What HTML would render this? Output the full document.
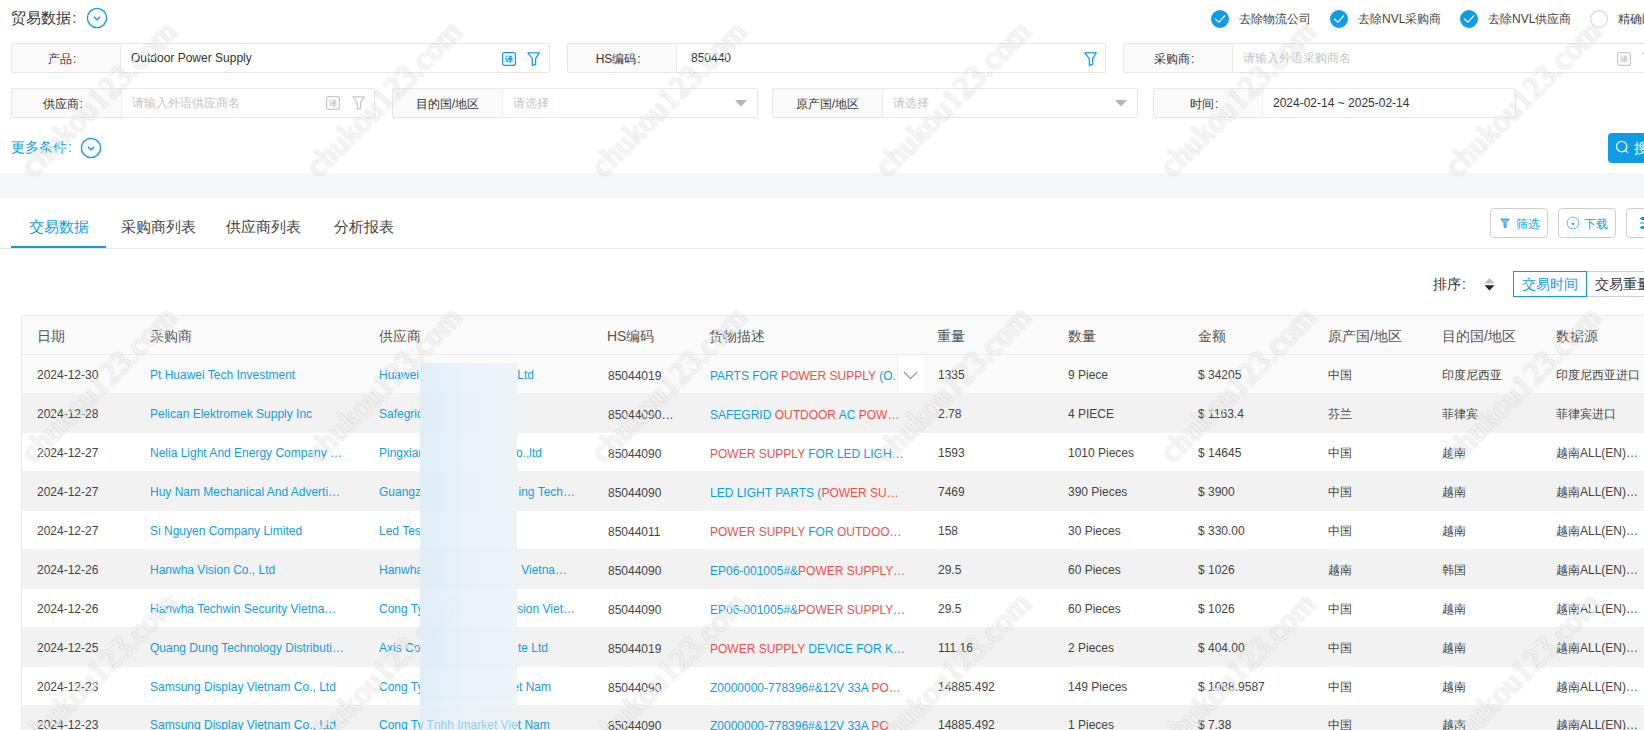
<!DOCTYPE html><html><head><meta charset="utf-8"><title>trade</title><style>
*{margin:0;padding:0;box-sizing:border-box}
html,body{width:1644px;height:730px;overflow:hidden;background:#fff}
body{position:relative;font-family:"Liberation Sans",sans-serif;color:#444;font-size:12px}
.ab{position:absolute;white-space:nowrap}
.lbl{position:absolute;background:#fafafa;border:1px solid #e6e6e6;border-radius:2px 0 0 2px;text-align:center;color:#333;font-size:12px;line-height:30px;height:30px}
.inp{position:absolute;background:#fff;border:1px solid #e6e6e6;border-left:1px solid #ececec;border-radius:0 2px 2px 0;height:30px;font-size:12px;line-height:28px;padding-left:10px;color:#333;white-space:nowrap}
.ph{color:#c4c4c4}
.co{display:inline-block;width:1em;text-align:left;padding-left:0.08em;font-family:"Liberation Sans",sans-serif}
.tr{position:absolute;left:21px;width:1623px;height:39px}
.td{position:absolute;top:0;padding-top:1px;font-size:12px;white-space:nowrap;color:#444}
.lk{color:#0e9ce5}
.rd{color:#f24d4d}
.th{position:absolute;top:0;padding-top:1px;line-height:38px;font-size:14px;color:#555;white-space:nowrap}
.wm{position:absolute;font-family:"Liberation Serif",serif;font-size:32px;line-height:normal;color:rgba(255,255,255,0.7);text-shadow:0 0 2.5px rgba(0,0,0,0.2);transform:rotate(-45deg);transform-origin:0 0;white-space:nowrap;pointer-events:none}
</style></head><body>
<div class="ab" style="left:11px;top:9px;font-size:15px;line-height:18px;color:#333">贸易数据<span class="co">:</span></div>
<svg class="ab" style="left:86px;top:7px" width="22" height="22" viewBox="0 0 22 22"><circle cx="11" cy="11" r="9.6" fill="none" stroke="#0e9ce5" stroke-width="1.4"/><path d="M7.8 9.8 L11 12.8 L14.2 9.8" fill="none" stroke="#0e9ce5" stroke-width="1.4"/></svg>
<svg class="ab" style="left:1211px;top:10px" width="18" height="18" viewBox="0 0 18 18"><circle cx="9" cy="9" r="9" fill="#0e9ce5"/><path d="M4 8.8 L8.1 12.2 L14 5.4" fill="none" stroke="#fff" stroke-width="1.3"/></svg>
<div class="ab" style="left:1239px;top:11px;line-height:16px;font-size:12px;color:#444">去除物流公司</div>
<svg class="ab" style="left:1330px;top:10px" width="18" height="18" viewBox="0 0 18 18"><circle cx="9" cy="9" r="9" fill="#0e9ce5"/><path d="M4 8.8 L8.1 12.2 L14 5.4" fill="none" stroke="#fff" stroke-width="1.3"/></svg>
<div class="ab" style="left:1358px;top:11px;line-height:16px;font-size:12px;color:#444">去除NVL采购商</div>
<svg class="ab" style="left:1460px;top:10px" width="18" height="18" viewBox="0 0 18 18"><circle cx="9" cy="9" r="9" fill="#0e9ce5"/><path d="M4 8.8 L8.1 12.2 L14 5.4" fill="none" stroke="#fff" stroke-width="1.3"/></svg>
<div class="ab" style="left:1488px;top:11px;line-height:16px;font-size:12px;color:#444">去除NVL供应商</div>
<svg class="ab" style="left:1590px;top:10px" width="18" height="18" viewBox="0 0 18 18"><circle cx="9" cy="9" r="8.4" fill="#fff" stroke="#d4d4d4" stroke-width="1.1"/></svg>
<div class="ab" style="left:1618px;top:11px;line-height:16px;font-size:12px;color:#444">精确匹配</div>
<div class="lbl" style="left:11px;top:43px;width:110px">产品<span class="co">:</span></div>
<div class="inp" style="left:120px;top:43px;width:430px">Outdoor Power Supply</div>
<svg class="ab" style="left:502px;top:52px" width="14" height="14" viewBox="0 0 14 14"><rect x="0.6" y="0.6" width="12.8" height="12.8" rx="2" fill="none" stroke="#0e9ce5" stroke-width="1.2"/><text x="7" y="10.2" font-size="8" text-anchor="middle" fill="#0e9ce5" font-family="Liberation Sans,sans-serif" font-weight="bold">译</text></svg>
<svg class="ab" style="left:526px;top:52px" width="14" height="14" viewBox="0 0 14 14"><path d="M1.9 0.9 H13.3 L9.6 6.6 V12.4 L6.3 13.3 V6.6 Z" fill="none" stroke="#0e9ce5" stroke-width="1.25" stroke-linejoin="round"/></svg>
<div class="lbl" style="left:567px;top:43px;width:110px">HS编码<span class="co">:</span></div>
<div class="inp" style="left:676px;top:43px;width:430px;padding-left:14px">850440</div>
<svg class="ab" style="left:1083px;top:52px" width="14" height="14" viewBox="0 0 14 14"><path d="M1.9 0.9 H13.3 L9.6 6.6 V12.4 L6.3 13.3 V6.6 Z" fill="none" stroke="#0e9ce5" stroke-width="1.25" stroke-linejoin="round"/></svg>
<div class="lbl" style="left:1123px;top:43px;width:110px">采购商<span class="co">:</span></div>
<div class="inp ph" style="left:1232px;top:43px;width:440px">请输入外语采购商名</div>
<svg class="ab" style="left:1617px;top:52px" width="14" height="14" viewBox="0 0 14 14"><rect x="0.6" y="0.6" width="12.8" height="12.8" rx="2" fill="none" stroke="#c8c8c8" stroke-width="1.2"/><text x="7" y="10.2" font-size="8" text-anchor="middle" fill="#c8c8c8" font-family="Liberation Sans,sans-serif" font-weight="bold">译</text></svg>
<svg class="ab" style="left:1641px;top:52px" width="14" height="14" viewBox="0 0 14 14"><path d="M1.9 0.9 H13.3 L9.6 6.6 V12.4 L6.3 13.3 V6.6 Z" fill="none" stroke="#c8c8c8" stroke-width="1.25" stroke-linejoin="round"/></svg>
<div class="lbl" style="left:11px;top:88px;width:111px">供应商<span class="co">:</span></div>
<div class="inp ph" style="left:121px;top:88px;width:254px">请输入外语供应商名</div>
<svg class="ab" style="left:326px;top:96px" width="14" height="14" viewBox="0 0 14 14"><rect x="0.6" y="0.6" width="12.8" height="12.8" rx="2" fill="none" stroke="#c8c8c8" stroke-width="1.2"/><text x="7" y="10.2" font-size="8" text-anchor="middle" fill="#c8c8c8" font-family="Liberation Sans,sans-serif" font-weight="bold">译</text></svg>
<svg class="ab" style="left:351px;top:96px" width="14" height="14" viewBox="0 0 14 14"><path d="M1.9 0.9 H13.3 L9.6 6.6 V12.4 L6.3 13.3 V6.6 Z" fill="none" stroke="#c8c8c8" stroke-width="1.25" stroke-linejoin="round"/></svg>
<div class="lbl" style="left:392px;top:88px;width:111px">目的国/地区</div>
<div class="inp ph" style="left:502px;top:88px;width:256px">请选择</div>
<svg class="ab" style="left:735px;top:100px" width="12" height="7" viewBox="0 0 12 7"><path d="M0 0 H12 L6 6.5 Z" fill="#b4b4b4"/></svg>
<div class="lbl" style="left:772px;top:88px;width:111px">原产国/地区</div>
<div class="inp ph" style="left:882px;top:88px;width:256px">请选择</div>
<svg class="ab" style="left:1115px;top:100px" width="12" height="7" viewBox="0 0 12 7"><path d="M0 0 H12 L6 6.5 Z" fill="#b4b4b4"/></svg>
<div class="lbl" style="left:1153px;top:88px;width:110px">时间<span class="co">:</span></div>
<div class="inp" style="left:1262px;top:88px;width:254px">2024-02-14 ~ 2025-02-14</div>
<div class="ab" style="left:11px;top:139px;font-size:14px;line-height:17px;color:#0e9ce5">更多条件<span class="co">:</span></div>
<svg class="ab" style="left:80px;top:137px" width="22" height="22" viewBox="0 0 22 22"><circle cx="11" cy="11" r="9.6" fill="none" stroke="#0e9ce5" stroke-width="1.4"/><path d="M7.8 9.8 L11 12.8 L14.2 9.8" fill="none" stroke="#0e9ce5" stroke-width="1.4"/></svg>
<div class="ab" style="left:1608px;top:133px;width:80px;height:30px;background:#0e9ce5;border-radius:4px"></div>
<svg class="ab" style="left:1615px;top:140px" width="14" height="14" viewBox="0 0 14 14"><circle cx="6.7" cy="6.6" r="5.2" fill="none" stroke="#fff" stroke-width="1.2"/><path d="M10.4 10.3 L13 12.9" stroke="#fff" stroke-width="1.2"/></svg>
<div class="ab" style="left:1634px;top:140px;font-size:14px;line-height:17px;color:#fff">搜索</div>
<div class="ab" style="left:0;top:173px;width:1644px;height:25px;background:#f5f6f8"></div>
<div class="ab" style="left:0;top:248px;width:1644px;height:1px;background:#e8e8e8"></div>
<div class="ab" style="left:11px;top:246px;width:95px;height:2px;background:#0e9ce5"></div>
<div class="ab" style="left:29px;top:218px;font-size:15px;line-height:18px;color:#0e9ce5">交易数据</div>
<div class="ab" style="left:121px;top:218px;font-size:15px;line-height:18px;color:#444">采购商列表</div>
<div class="ab" style="left:226px;top:218px;font-size:15px;line-height:18px;color:#444">供应商列表</div>
<div class="ab" style="left:334px;top:218px;font-size:15px;line-height:18px;color:#444">分析报表</div>
<div class="ab" style="left:1490px;top:208px;width:58px;height:30px;border:1px solid #cfcfcf;border-radius:4px;background:#fff"></div><svg class="ab" style="left:1500px;top:218px" width="10" height="11" viewBox="0 0 10 11"><path d="M0.8 1 H9.2 L6 4.8 V10 L4 9 V4.8 Z" fill="rgba(14,156,229,0.55)" stroke="#0e9ce5" stroke-width="0.9" stroke-linejoin="round"/></svg><div class="ab" style="left:1516px;top:217px;font-size:12px;line-height:14px;color:#0e9ce5">筛选</div>
<div class="ab" style="left:1558px;top:208px;width:58px;height:30px;border:1px solid #cfcfcf;border-radius:4px;background:#fff"></div><svg class="ab" style="left:1566px;top:216px" width="14" height="14" viewBox="0 0 14 14"><circle cx="7" cy="7" r="5.9" fill="none" stroke="rgba(14,156,229,0.75)" stroke-width="0.9"/><path d="M7 3.6 V7.6" stroke="rgba(14,156,229,0.45)" stroke-width="1"/><path d="M5.1 7.3 H8.9 L7 9.4 Z" fill="#0e9ce5"/></svg><div class="ab" style="left:1584px;top:217px;font-size:12px;line-height:14px;color:#0e9ce5">下载</div>
<div class="ab" style="left:1626px;top:208px;width:58px;height:30px;border:1px solid #cfcfcf;border-radius:4px;background:#fff"></div>
<svg class="ab" style="left:1638px;top:215px" width="12" height="16" viewBox="0 0 12 16"><path d="M2 3.5 H12 M2 8 H12 M2 12.5 H12" stroke="#0e9ce5" stroke-width="1.1"/><circle cx="4.5" cy="3.5" r="1.7" fill="#0e9ce5"/><circle cx="8" cy="8" r="1.7" fill="#0e9ce5"/><circle cx="4.5" cy="12.5" r="1.7" fill="#0e9ce5"/></svg>
<div class="ab" style="left:1433px;top:276px;font-size:14px;line-height:17px;color:#333">排序<span class="co">:</span></div>
<svg class="ab" style="left:1484px;top:278px" width="11" height="13" viewBox="0 0 11 13"><path d="M5.5 0 L10.5 5.5 H0.5 Z" fill="#bdbdbd"/><path d="M0.5 7.2 H10.5 L5.5 12.5 Z" fill="#222"/></svg>
<div class="ab" style="left:1586px;top:271px;width:100px;height:26px;border:1px solid #d0d0d0;background:#fff"></div>
<div class="ab" style="left:1513px;top:271px;width:74px;height:26px;border:1px solid #0e9ce5;background:#fff"></div>
<div class="ab" style="left:1522px;top:276px;font-size:14px;line-height:17px;color:#0e9ce5">交易时间</div>
<div class="ab" style="left:1595px;top:276px;font-size:14px;line-height:17px;color:#333">交易重量</div>
<div class="ab" style="left:21px;top:315px;width:1640px;height:40px;background:#fafafa;border:1px solid #ebebeb;border-right:none"></div>
<div class="ab" style="left:21px;top:354px;width:1px;height:376px;background:#ebebeb"></div>
<div class="th" style="left:37px;top:316px">日期</div>
<div class="th" style="left:150px;top:316px">采购商</div>
<div class="th" style="left:379px;top:316px">供应商</div>
<div class="th" style="left:607px;top:316px">HS编码</div>
<div class="th" style="left:709px;top:316px">货物描述</div>
<div class="th" style="left:937px;top:316px">重量</div>
<div class="th" style="left:1068px;top:316px">数量</div>
<div class="th" style="left:1198px;top:316px">金额</div>
<div class="th" style="left:1328px;top:316px">原产国/地区</div>
<div class="th" style="left:1442px;top:316px">目的国/地区</div>
<div class="th" style="left:1556px;top:316px">数据源</div>
<div class="ab" style="left:22px;top:355px;width:1622px;height:38px;background:#fafafa"></div>
<div class="td" style="left:37px;top:355px;height:38px;line-height:38px">2024-12-30</div>
<div class="td" style="left:150px;top:355px;height:38px;line-height:38px"><span class="lk">Pt Huawei Tech Investment</span></div>
<div class="td" style="left:379px;top:355px;height:38px;line-height:38px;width:41px;overflow:hidden;"><span class="lk">Huawei</span></div>
<div class="ab" style="left:517px;top:355px;width:17px;height:38px;overflow:hidden"><div class="td" style="left:auto;right:0;height:38px;line-height:38px"><span class="lk">Investment Co., Ltd</span></div></div>
<div class="td" style="left:608px;top:356px;height:38px;line-height:38px">85044019</div>
<div class="td" style="left:710px;top:356px;height:38px;line-height:38px"><span class="lk">PARTS FOR </span><span class="rd">POWER SUPPLY</span><span class="lk"> (O.</span></div>
<div class="td" style="left:938px;top:355px;height:38px;line-height:38px">1335</div>
<div class="td" style="left:1068px;top:355px;height:38px;line-height:38px">9 Piece</div>
<div class="td" style="left:1198px;top:355px;height:38px;line-height:38px">$ 34205</div>
<div class="td" style="left:1328px;top:355px;height:38px;line-height:38px">中国</div>
<div class="td" style="left:1442px;top:355px;height:38px;line-height:38px">印度尼西亚</div>
<div class="td" style="left:1556px;top:355px;height:38px;line-height:38px">印度尼西亚进口</div>
<div class="ab" style="left:897px;top:355px;width:26px;height:37px;background:#fff;border-left:1px solid #ececec"></div>
<svg class="ab" style="left:903px;top:371px" width="15" height="9" viewBox="0 0 15 9"><path d="M0.8 0.8 L7.5 7.6 L14.2 0.8" fill="none" stroke="#8a8a8a" stroke-width="1.1"/></svg>
<div class="ab" style="left:22px;top:393px;width:1622px;height:40px;background:#f2f2f2"></div>
<div class="td" style="left:37px;top:393px;height:40px;line-height:40px">2024-12-28</div>
<div class="td" style="left:150px;top:393px;height:40px;line-height:40px"><span class="lk">Pelican Elektromek Supply Inc</span></div>
<div class="td" style="left:379px;top:393px;height:40px;line-height:40px;width:41px;overflow:hidden;"><span class="lk">Safegrid</span></div>
<div class="td" style="left:608px;top:394px;height:40px;line-height:40px">85044090…</div>
<div class="td" style="left:710px;top:394px;height:40px;line-height:40px"><span class="lk">SAFEGRID </span><span class="rd">OUTDOOR</span><span class="lk"> AC </span><span class="rd">POW…</span></div>
<div class="td" style="left:938px;top:393px;height:40px;line-height:40px">2.78</div>
<div class="td" style="left:1068px;top:393px;height:40px;line-height:40px">4 PIECE</div>
<div class="td" style="left:1198px;top:393px;height:40px;line-height:40px">$ 1163.4</div>
<div class="td" style="left:1328px;top:393px;height:40px;line-height:40px">芬兰</div>
<div class="td" style="left:1442px;top:393px;height:40px;line-height:40px">菲律宾</div>
<div class="td" style="left:1556px;top:393px;height:40px;line-height:40px">菲律宾进口</div>
<div class="ab" style="left:22px;top:433px;width:1622px;height:38px;background:#fff"></div>
<div class="td" style="left:37px;top:433px;height:38px;line-height:38px">2024-12-27</div>
<div class="td" style="left:150px;top:433px;height:38px;line-height:38px"><span class="lk">Nelia Light And Energy Company …</span></div>
<div class="td" style="left:379px;top:433px;height:38px;line-height:38px;width:41px;overflow:hidden;"><span class="lk">Pingxiang</span></div>
<div class="ab" style="left:517px;top:433px;width:25px;height:38px;overflow:hidden"><div class="td" style="left:auto;right:0;height:38px;line-height:38px"><span class="lk">Technology Co.,ltd</span></div></div>
<div class="td" style="left:608px;top:434px;height:38px;line-height:38px">85044090</div>
<div class="td" style="left:710px;top:434px;height:38px;line-height:38px"><span class="rd">POWER SUPPLY</span><span class="lk"> FOR LED LIGH…</span></div>
<div class="td" style="left:938px;top:433px;height:38px;line-height:38px">1593</div>
<div class="td" style="left:1068px;top:433px;height:38px;line-height:38px">1010 Pieces</div>
<div class="td" style="left:1198px;top:433px;height:38px;line-height:38px">$ 14645</div>
<div class="td" style="left:1328px;top:433px;height:38px;line-height:38px">中国</div>
<div class="td" style="left:1442px;top:433px;height:38px;line-height:38px">越南</div>
<div class="td" style="left:1556px;top:433px;height:38px;line-height:38px">越南ALL(EN)…</div>
<div class="ab" style="left:22px;top:471px;width:1622px;height:40px;background:#f2f2f2"></div>
<div class="td" style="left:37px;top:471px;height:40px;line-height:40px">2024-12-27</div>
<div class="td" style="left:150px;top:471px;height:40px;line-height:40px"><span class="lk">Huy Nam Mechanical And Adverti…</span></div>
<div class="td" style="left:379px;top:471px;height:40px;line-height:40px;width:41px;overflow:hidden;"><span class="lk">Guangzhou</span></div>
<div class="ab" style="left:517px;top:471px;width:58px;height:40px;overflow:hidden"><div class="td" style="left:auto;right:0;height:40px;line-height:40px"><span class="lk">ing Tech…</span></div></div>
<div class="td" style="left:608px;top:472px;height:40px;line-height:40px">85044090</div>
<div class="td" style="left:710px;top:472px;height:40px;line-height:40px"><span class="lk">LED LIGHT PARTS (</span><span class="rd">POWER SU…</span></div>
<div class="td" style="left:938px;top:471px;height:40px;line-height:40px">7469</div>
<div class="td" style="left:1068px;top:471px;height:40px;line-height:40px">390 Pieces</div>
<div class="td" style="left:1198px;top:471px;height:40px;line-height:40px">$ 3900</div>
<div class="td" style="left:1328px;top:471px;height:40px;line-height:40px">中国</div>
<div class="td" style="left:1442px;top:471px;height:40px;line-height:40px">越南</div>
<div class="td" style="left:1556px;top:471px;height:40px;line-height:40px">越南ALL(EN)…</div>
<div class="ab" style="left:22px;top:511px;width:1622px;height:38px;background:#fff"></div>
<div class="td" style="left:37px;top:511px;height:38px;line-height:38px">2024-12-27</div>
<div class="td" style="left:150px;top:511px;height:38px;line-height:38px"><span class="lk">Si Nguyen Company Limited</span></div>
<div class="td" style="left:379px;top:511px;height:38px;line-height:38px;width:41px;overflow:hidden;"><span class="lk">Led Test</span></div>
<div class="td" style="left:608px;top:512px;height:38px;line-height:38px">85044011</div>
<div class="td" style="left:710px;top:512px;height:38px;line-height:38px"><span class="rd">POWER SUPPLY</span><span class="lk"> FOR </span><span class="rd">OUTDOO…</span></div>
<div class="td" style="left:938px;top:511px;height:38px;line-height:38px">158</div>
<div class="td" style="left:1068px;top:511px;height:38px;line-height:38px">30 Pieces</div>
<div class="td" style="left:1198px;top:511px;height:38px;line-height:38px">$ 330.00</div>
<div class="td" style="left:1328px;top:511px;height:38px;line-height:38px">中国</div>
<div class="td" style="left:1442px;top:511px;height:38px;line-height:38px">越南</div>
<div class="td" style="left:1556px;top:511px;height:38px;line-height:38px">越南ALL(EN)…</div>
<div class="ab" style="left:22px;top:549px;width:1622px;height:40px;background:#f2f2f2"></div>
<div class="td" style="left:37px;top:549px;height:40px;line-height:40px">2024-12-26</div>
<div class="td" style="left:150px;top:549px;height:40px;line-height:40px"><span class="lk">Hanwha Vision Co., Ltd</span></div>
<div class="td" style="left:379px;top:549px;height:40px;line-height:40px;width:41px;overflow:hidden;"><span class="lk">Hanwha</span></div>
<div class="ab" style="left:517px;top:549px;width:50px;height:40px;overflow:hidden"><div class="td" style="left:auto;right:0;height:40px;line-height:40px"><span class="lk">Vietna…</span></div></div>
<div class="td" style="left:608px;top:550px;height:40px;line-height:40px">85044090</div>
<div class="td" style="left:710px;top:550px;height:40px;line-height:40px"><span class="lk">EP06-001005#&</span><span class="rd">POWER SUPPLY…</span></div>
<div class="td" style="left:938px;top:549px;height:40px;line-height:40px">29.5</div>
<div class="td" style="left:1068px;top:549px;height:40px;line-height:40px">60 Pieces</div>
<div class="td" style="left:1198px;top:549px;height:40px;line-height:40px">$ 1026</div>
<div class="td" style="left:1328px;top:549px;height:40px;line-height:40px">越南</div>
<div class="td" style="left:1442px;top:549px;height:40px;line-height:40px">韩国</div>
<div class="td" style="left:1556px;top:549px;height:40px;line-height:40px">越南ALL(EN)…</div>
<div class="ab" style="left:22px;top:589px;width:1622px;height:38px;background:#fff"></div>
<div class="td" style="left:37px;top:589px;height:38px;line-height:38px">2024-12-26</div>
<div class="td" style="left:150px;top:589px;height:38px;line-height:38px"><span class="lk">Hanwha Techwin Security Vietna…</span></div>
<div class="td" style="left:379px;top:589px;height:38px;line-height:38px;width:41px;overflow:hidden;"><span class="lk">Cong Ty</span></div>
<div class="ab" style="left:517px;top:589px;width:58px;height:38px;overflow:hidden"><div class="td" style="left:auto;right:0;height:38px;line-height:38px"><span class="lk">Hanwha Vision Viet…</span></div></div>
<div class="td" style="left:608px;top:590px;height:38px;line-height:38px">85044090</div>
<div class="td" style="left:710px;top:590px;height:38px;line-height:38px"><span class="lk">EP06-001005#&</span><span class="rd">POWER SUPPLY…</span></div>
<div class="td" style="left:938px;top:589px;height:38px;line-height:38px">29.5</div>
<div class="td" style="left:1068px;top:589px;height:38px;line-height:38px">60 Pieces</div>
<div class="td" style="left:1198px;top:589px;height:38px;line-height:38px">$ 1026</div>
<div class="td" style="left:1328px;top:589px;height:38px;line-height:38px">中国</div>
<div class="td" style="left:1442px;top:589px;height:38px;line-height:38px">越南</div>
<div class="td" style="left:1556px;top:589px;height:38px;line-height:38px">越南ALL(EN)…</div>
<div class="ab" style="left:22px;top:627px;width:1622px;height:40px;background:#f2f2f2"></div>
<div class="td" style="left:37px;top:627px;height:40px;line-height:40px">2024-12-25</div>
<div class="td" style="left:150px;top:627px;height:40px;line-height:40px"><span class="lk">Quang Dung Technology Distributi…</span></div>
<div class="td" style="left:379px;top:627px;height:40px;line-height:40px;width:41px;overflow:hidden;"><span class="lk">Axis Co</span></div>
<div class="ab" style="left:517px;top:627px;width:31px;height:40px;overflow:hidden"><div class="td" style="left:auto;right:0;height:40px;line-height:40px"><span class="lk">te Ltd</span></div></div>
<div class="td" style="left:608px;top:628px;height:40px;line-height:40px">85044019</div>
<div class="td" style="left:710px;top:628px;height:40px;line-height:40px"><span class="rd">POWER SUPPLY</span><span class="lk"> DEVICE FOR K…</span></div>
<div class="td" style="left:938px;top:627px;height:40px;line-height:40px">111.16</div>
<div class="td" style="left:1068px;top:627px;height:40px;line-height:40px">2 Pieces</div>
<div class="td" style="left:1198px;top:627px;height:40px;line-height:40px">$ 404.00</div>
<div class="td" style="left:1328px;top:627px;height:40px;line-height:40px">中国</div>
<div class="td" style="left:1442px;top:627px;height:40px;line-height:40px">越南</div>
<div class="td" style="left:1556px;top:627px;height:40px;line-height:40px">越南ALL(EN)…</div>
<div class="ab" style="left:22px;top:667px;width:1622px;height:38px;background:#fff"></div>
<div class="td" style="left:37px;top:667px;height:38px;line-height:38px">2024-12-23</div>
<div class="td" style="left:150px;top:667px;height:38px;line-height:38px"><span class="lk">Samsung Display Vietnam Co., Ltd</span></div>
<div class="td" style="left:379px;top:667px;height:38px;line-height:38px;width:41px;overflow:hidden;"><span class="lk">Cong Ty</span></div>
<div class="ab" style="left:517px;top:667px;width:34px;height:38px;overflow:hidden"><div class="td" style="left:auto;right:0;height:38px;line-height:38px"><span class="lk">Tnhh Imarket Viet Nam</span></div></div>
<div class="td" style="left:608px;top:668px;height:38px;line-height:38px">85044090</div>
<div class="td" style="left:710px;top:668px;height:38px;line-height:38px"><span class="lk">Z0000000-778396#&12V 33A </span><span class="rd">PO…</span></div>
<div class="td" style="left:938px;top:667px;height:38px;line-height:38px">14885.492</div>
<div class="td" style="left:1068px;top:667px;height:38px;line-height:38px">149 Pieces</div>
<div class="td" style="left:1198px;top:667px;height:38px;line-height:38px">$ 1088.9587</div>
<div class="td" style="left:1328px;top:667px;height:38px;line-height:38px">中国</div>
<div class="td" style="left:1442px;top:667px;height:38px;line-height:38px">越南</div>
<div class="td" style="left:1556px;top:667px;height:38px;line-height:38px">越南ALL(EN)…</div>
<div class="ab" style="left:22px;top:705px;width:1622px;height:39px;background:#f2f2f2"></div>
<div class="td" style="left:37px;top:705px;height:39px;line-height:39px">2024-12-23</div>
<div class="td" style="left:150px;top:705px;height:39px;line-height:39px"><span class="lk">Samsung Display Vietnam Co., Ltd</span></div>
<div class="td" style="left:379px;top:705px;height:39px;line-height:39px;"><span class="lk">Cong Ty Tnhh Imarket Viet Nam</span></div>
<div class="td" style="left:608px;top:706px;height:39px;line-height:39px">85044090</div>
<div class="td" style="left:710px;top:706px;height:39px;line-height:39px"><span class="lk">Z0000000-778396#&12V 33A </span><span class="rd">PO</span></div>
<div class="td" style="left:938px;top:705px;height:39px;line-height:39px">14885.492</div>
<div class="td" style="left:1068px;top:705px;height:39px;line-height:39px">1 Pieces</div>
<div class="td" style="left:1198px;top:705px;height:39px;line-height:39px">$ 7.38</div>
<div class="td" style="left:1328px;top:705px;height:39px;line-height:39px">中国</div>
<div class="td" style="left:1442px;top:705px;height:39px;line-height:39px">越南</div>
<div class="td" style="left:1556px;top:705px;height:39px;line-height:39px">越南ALL(EN)…</div>
<div class="wm" style="left:13.0px;top:158px">chukou123.com</div>
<div class="wm" style="left:297.8px;top:158px">chukou123.com</div>
<div class="wm" style="left:582.6px;top:158px">chukou123.com</div>
<div class="wm" style="left:867.4px;top:158px">chukou123.com</div>
<div class="wm" style="left:1152.2px;top:158px">chukou123.com</div>
<div class="wm" style="left:1437.0px;top:158px">chukou123.com</div>
<div class="wm" style="left:13.0px;top:444px">chukou123.com</div>
<div class="wm" style="left:297.8px;top:444px">chukou123.com</div>
<div class="wm" style="left:582.6px;top:444px">chukou123.com</div>
<div class="wm" style="left:867.4px;top:444px">chukou123.com</div>
<div class="wm" style="left:1152.2px;top:444px">chukou123.com</div>
<div class="wm" style="left:1437.0px;top:444px">chukou123.com</div>
<div class="wm" style="left:13.0px;top:730px">chukou123.com</div>
<div class="wm" style="left:297.8px;top:730px">chukou123.com</div>
<div class="wm" style="left:582.6px;top:730px">chukou123.com</div>
<div class="wm" style="left:867.4px;top:730px">chukou123.com</div>
<div class="wm" style="left:1152.2px;top:730px">chukou123.com</div>
<div class="wm" style="left:1437.0px;top:730px">chukou123.com</div>
<div class="ab" style="left:420px;top:363px;width:97px;height:367px;background:linear-gradient(90deg,rgba(220,236,247,0.9) 0%,rgba(230,240,248,0.88) 45%,rgba(236,242,247,0.88) 100%);-webkit-mask-image:linear-gradient(180deg,#000 0,#000 91%,rgba(0,0,0,0.7) 96%,rgba(0,0,0,0.62) 100%)"></div>
</body></html>
